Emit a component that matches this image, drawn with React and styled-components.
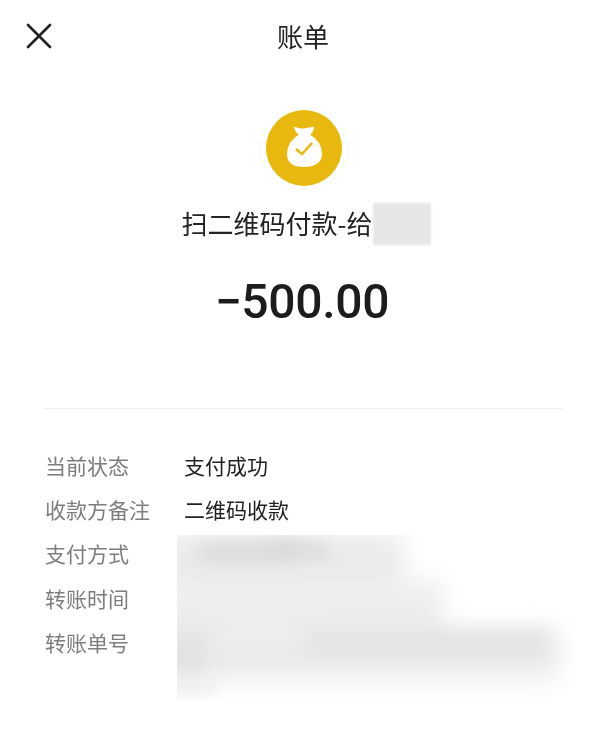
import React from 'react'
import styled, { createGlobalStyle } from 'styled-components'

const CJK = `"Noto Sans CJK SC", "Noto Sans", sans-serif`

const rows = [
    { label: '当前状态', value: '支付成功' },
    { label: '收款方备注', value: '二维码收款' },
    { label: '支付方式' },
    { label: '转账时间' },
    { label: '转账单号' },
]

// grey smears that hide the last three values
const smears = [
    { x: -14, y: -2, w: 240, h: 62, c: '#ebebeb', b: 12 },
    { x: 22, y: 8, w: 100, h: 18, c: '#dadada', b: 9 },
    { x: 92, y: 9, w: 60, h: 12, c: '#d8d8d8', b: 8 },
    { x: -14, y: 46, w: 280, h: 66, c: '#ededed', b: 12 },
    { x: -14, y: 94, w: 396, h: 50, c: '#ebebeb', b: 12 },
    { x: 130, y: 97, w: 240, h: 20, c: '#e2e2e2', b: 9 },
    { x: -14, y: 98, w: 44, h: 48, c: '#e2e2e2', b: 10 },
    { x: -14, y: 140, w: 54, h: 18, c: '#f0f0f0', b: 8 },
]

const App = () => {
    return (
        <Page>
            <GlobalStyle />
            <Header>
                <CloseButton aria-label="关闭">
                    <svg width="26" height="26" viewBox="0 0 26 26">
                        <path d="M2 2L24 24M24 2L2 24" stroke="#222" strokeWidth="2.6" strokeLinecap="round" fill="none" />
                    </svg>
                </CloseButton>
                <Title>账单</Title>
            </Header>
            <Summary>
                <BagIcon width="76" height="76" viewBox="0 0 76 76">
                    <circle cx="38" cy="38" r="38" fill="#e8b80e" />
                    <path
                        fill="#fff"
                        stroke="#fff"
                        strokeWidth="2"
                        strokeLinejoin="round"
                        d="M29 18C32 19 35 20 38 19.5C41 19 44 18 47 18C46.500 21 45 23 43 25C50 29 55 36 55 44C55 52 48 56 38 56C28 56 22 52 22 44C22 36 27 29 34 25C32 23 30 21 29 18Z"
                    />
                    <path d="M30 39L36 44L46 33" stroke="#e8b80e" strokeWidth="2.6" fill="none" />
                </BagIcon>
                <Payee>
                    <PayeeText>扫二维码付款-给</PayeeText>
                    <PayeeMask />
                </Payee>
                <Amount>−500.00</Amount>
            </Summary>
            <Divider />
            <Details>
                {rows.map((row) => (
                    <Row key={row.label}>
                        <Label>{row.label}</Label>
                        <Value>{row.value}</Value>
                    </Row>
                ))}
                <Redaction>
                    {smears.map((s, i) => (
                        <Smear
                            key={i}
                            style={{ left: s.x, top: s.y, width: s.w, height: s.h, background: s.c, filter: `blur(${s.b}px)` }}
                        />
                    ))}
                </Redaction>
            </Details>
        </Page>
    )
}

export default App

const GlobalStyle = createGlobalStyle`
    html, body {
        margin: 0;
        padding: 0;
        background: #fff;
    }
`

const Page = styled.div`
    width: 600px;
    height: 739px;
    overflow: hidden;
    background: #fff;
    font-family: ${CJK};
    color: #222;
`

const Header = styled.header`
    display: grid;
    grid-template-columns: 1fr auto 1fr;
    align-items: center;
    height: 72px;
    padding: 0 20px 0 26px;
    box-sizing: border-box;
`

const CloseButton = styled.button`
    display: flex;
    justify-self: start;
    padding: 0;
    border: 0;
    background: none;
`

const Title = styled.h1`
    margin: 0;
    font-size: 26px;
    font-weight: 400;
    line-height: 1;
    filter: blur(0.3px);
`

const Summary = styled.section`
    display: flex;
    flex-direction: column;
    align-items: center;
    padding: 38px 0 0 12px;
`

const BagIcon = styled.svg`
    display: block;
    margin-right: 4px;
    filter: blur(0.5px);
`

const Payee = styled.div`
    display: flex;
    align-items: center;
    height: 42px;
    margin-top: 17px;
    font-size: 26px;
    line-height: 1;
`

const PayeeText = styled.span`
    padding-bottom: 3px;
    filter: blur(0.3px);
`

const PayeeMask = styled.span`
    width: 58px;
    height: 42px;
    background: #e6e6e6;
    filter: blur(1px);
`

const Amount = styled.div`
    margin: 28px 8px 0 0;
    font-family: Roboto, "Liberation Sans", sans-serif;
    font-size: 48px;
    font-weight: 500;
    line-height: 58px;
    letter-spacing: -0.3px;
    color: #1c1c1c;
    filter: blur(0.3px);
`

const Divider = styled.hr`
    height: 1px;
    margin: 77px 37px 0 44px;
    border: 0;
    background: #efefef;
`

const Details = styled.dl`
    position: relative;
    display: flex;
    flex-direction: column;
    margin: 34px 0 0;
    padding-left: 45px;
`

const Row = styled.div`
    display: grid;
    grid-template-columns: 139px 1fr;
    align-items: center;
    height: 44.3px;
`

const Label = styled.dt`
    font-size: 21px;
    line-height: 1;
    color: #7d7d7d;
    filter: blur(0.3px);
`

const Value = styled.dd`
    margin: 0;
    font-size: 21px;
    line-height: 1;
    color: #1f1f1f;
    filter: blur(0.3px);
`

const Redaction = styled.div`
    position: absolute;
    left: 177px;
    top: 92px;
    width: 400px;
    height: 165px;
    overflow: hidden;
`

const Smear = styled.span`
    position: absolute;
    display: block;
`
